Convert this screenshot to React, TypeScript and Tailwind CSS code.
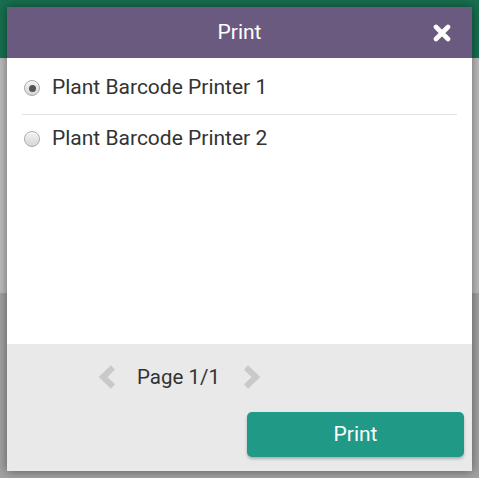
import React from "react";

function Radio({ checked }: { checked?: boolean }) {
  return (
    <div className="ml-[2px] flex h-4 w-4 shrink-0 items-center justify-center rounded-full border border-[#a9a9a9] bg-gradient-to-b from-[#f4f4f4] to-[#d6d6d6] shadow-[inset_0_1px_1px_rgba(255,255,255,0.8)]">
      {checked && <div className="h-[7px] w-[7px] rounded-full bg-[#555]" />}
    </div>
  );
}

function Chevron({ dir }: { dir: "left" | "right" }) {
  return (
    <svg width="18" height="24" viewBox="0 0 18 24" className="shrink-0">
      {dir === "left" ? (
        <path d="M15 2.5 L5 12 L15 21.5" fill="none" stroke="#c9c9c9" strokeWidth="6" strokeLinejoin="miter" />
      ) : (
        <path d="M3 2.5 L13 12 L3 21.5" fill="none" stroke="#c9c9c9" strokeWidth="6" strokeLinejoin="miter" />
      )}
    </svg>
  );
}

export default function App() {
  return (
    <div className="relative h-[478px] w-[479px] overflow-hidden font-['Roboto',sans-serif]">
      <div className="flex h-full flex-col">
        <div className="h-[58px] bg-[#17704f]" />
        <div className="h-[235px] bg-[#bdbdbd]" />
        <div className="flex-1 bg-[#a2a2a2]" />
      </div>
      <div className="absolute left-[7px] top-[7px] flex h-[464px] w-[465px] flex-col shadow-[0_0_10px_rgba(0,0,0,0.45)]">
        <div className="relative flex h-[51px] items-center justify-center bg-[#6b5a80]">
          <span className="text-[21px] text-white">Print</span>
          <svg width="18" height="18" viewBox="0 0 18 18" className="absolute left-[426px] top-[17px]">
            <path d="M3 3 L15 15 M15 3 L3 15" stroke="#fff" strokeWidth="4.6" strokeLinecap="round" />
          </svg>
        </div>
        <div className="flex-1 bg-white px-[15px] pt-[4px]">
          <div className="flex h-[53px] items-center gap-[12px] border-b border-[#e3e3e3]">
            <Radio checked />
            <span className="text-[21px] text-[#333]">Plant Barcode Printer 1</span>
          </div>
          <div className="flex h-[48px] items-center gap-[12px]">
            <Radio />
            <span className="text-[21px] text-[#333]">Plant Barcode Printer 2</span>
          </div>
        </div>
        <div className="flex h-[127px] flex-col bg-[#e9e9e9] pt-[20px]">
          <div className="flex h-[26px] items-center pl-[91px]">
            <Chevron dir="left" />
            <span className="ml-[21px] text-[20.5px] text-[#333]">Page 1/1</span>
            <span className="ml-[23px]">
              <Chevron dir="right" />
            </span>
          </div>
          <button className="mr-[8px] mt-[22px] flex h-[45px] w-[217px] items-center justify-center self-end rounded-[5px] bg-[#209a86] text-[21px] text-white shadow-[0_2px_3px_rgba(0,0,0,0.25)]">
            Print
          </button>
        </div>
      </div>
    </div>
  );
}
